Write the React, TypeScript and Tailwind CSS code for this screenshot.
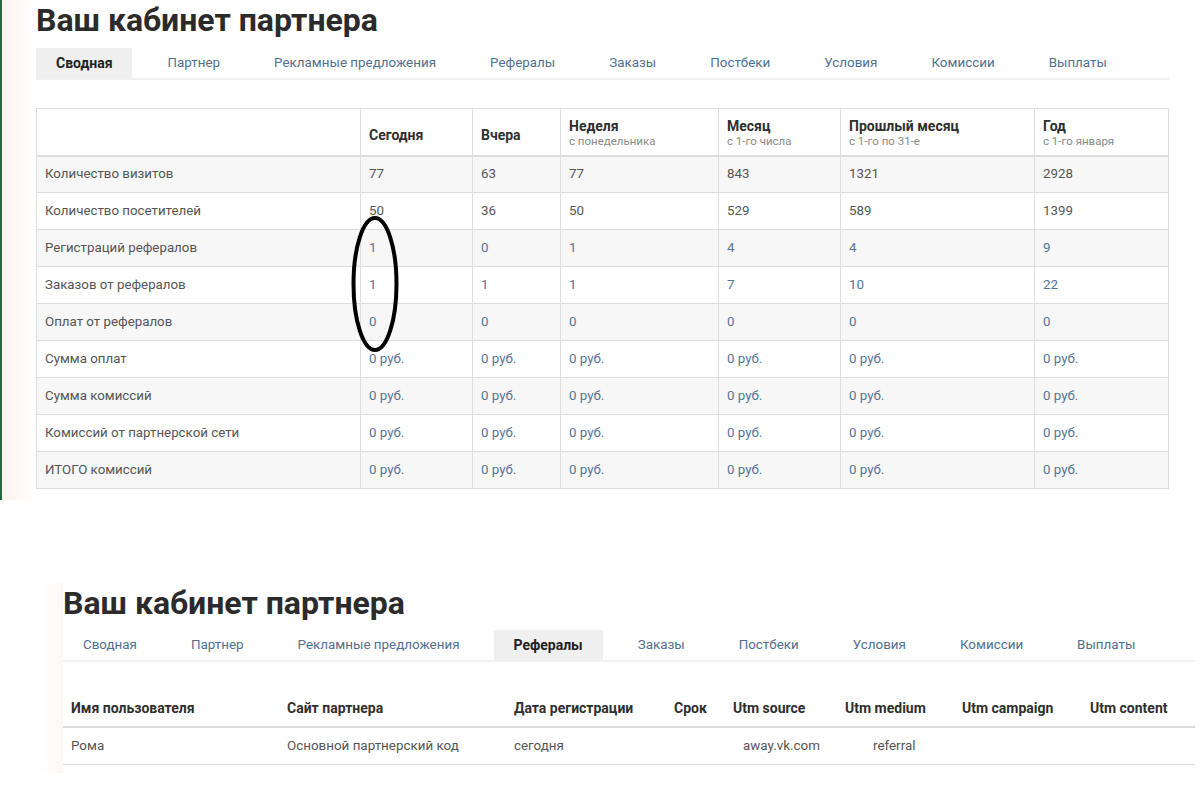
import React from "react";

const TABS = [
  "Сводная",
  "Партнер",
  "Рекламные предложения",
  "Рефералы",
  "Заказы",
  "Постбеки",
  "Условия",
  "Комиссии",
  "Выплаты",
];

type Col = { title: string; sub?: string; w: string };

const COLS: Col[] = [
  { title: "", w: "w-[324px]" },
  { title: "Сегодня", w: "w-[112px]" },
  { title: "Вчера", w: "w-[88px]" },
  { title: "Неделя", sub: "с понедельника", w: "w-[158px]" },
  { title: "Месяц", sub: "с 1-го числа", w: "w-[122px]" },
  { title: "Прошлый месяц", sub: "с 1-го по 31-е", w: "w-[194px]" },
  { title: "Год", sub: "с 1-го января", w: "w-[134px]" },
];

const RUB = ["0 руб.", "0 руб.", "0 руб.", "0 руб.", "0 руб.", "0 руб."];

const ROWS: { label: string; values: string[]; link: boolean }[] = [
  { label: "Количество визитов", values: ["77", "63", "77", "843", "1321", "2928"], link: false },
  { label: "Количество посетителей", values: ["50", "36", "50", "529", "589", "1399"], link: false },
  { label: "Регистраций рефералов", values: ["1", "0", "1", "4", "4", "9"], link: true },
  { label: "Заказов от рефералов", values: ["1", "1", "1", "7", "10", "22"], link: true },
  { label: "Оплат от рефералов", values: ["0", "0", "0", "0", "0", "0"], link: true },
  { label: "Сумма оплат", values: RUB, link: true },
  { label: "Сумма комиссий", values: RUB, link: true },
  { label: "Комиссий от партнерской сети", values: RUB, link: true },
  { label: "ИТОГО комиссий", values: RUB, link: true },
];

const REF_COLS = [
  { title: "Имя пользователя", w: "w-[216px]", value: "Рома", pl: "pl-2" },
  { title: "Сайт партнера", w: "w-[227px]", value: "Основной партнерский код", pl: "pl-2" },
  { title: "Дата регистрации", w: "w-[160px]", value: "сегодня", pl: "pl-2" },
  { title: "Срок", w: "w-[59px]", value: "", pl: "pl-2" },
  { title: "Utm source", w: "w-[112px]", value: "away.vk.com", pl: "pl-[18px]" },
  { title: "Utm medium", w: "w-[117px]", value: "referral", pl: "pl-[36px]" },
  { title: "Utm campaign", w: "w-[128px]", value: "", pl: "pl-2" },
  { title: "Utm content", w: "w-[113px]", value: "", pl: "pl-2" },
];

function Title() {
  return (
    <h1 className="whitespace-nowrap text-[32px] font-bold leading-[40px] text-[#2b2b2b]">
      Ваш кабинет партнера
    </h1>
  );
}

function Tabs({ active }: { active: string }) {
  return (
    <div className="flex border-b-2 border-[#f1f1f1]">
      {TABS.map((t) => (
        <div
          key={t}
          className={
            t === active
              ? "mr-[15px] whitespace-nowrap bg-[#efefef] px-5 text-[14px] font-bold leading-[30px] text-[#222]"
              : "mr-[14px] whitespace-nowrap px-5 text-[13.4px] leading-[30px] text-[#4f7090]"
          }
        >
          {t}
        </div>
      ))}
    </div>
  );
}

function Summary() {
  return (
    <table className="mt-[28px] w-[1132px] table-fixed border-collapse text-[13.3px]">
      <thead>
        <tr className="h-[47px] bg-white">
          {COLS.map((c, i) => (
            <th
              key={i}
              className={`${c.w} border border-b-2 border-[#dddddd] px-[8px] text-left align-middle ${
                c.sub ? "pt-[3px]" : "pt-[8px]"
              }`}
            >
              <div className="text-[14px] font-bold leading-[17px] text-[#2f2f2f]">{c.title}</div>
              {c.sub && (
                <div className="text-[11.5px] font-normal leading-[13px] text-[#8a8a8a]">{c.sub}</div>
              )}
            </th>
          ))}
        </tr>
      </thead>
      <tbody>
        {ROWS.map((r, i) => (
          <tr key={r.label} className={i % 2 === 0 ? "h-[37px] bg-[#f7f7f7]" : "h-[37px] bg-white"}>
            <td className="border border-[#dddddd] px-[8px] pb-[1px] text-[#555]">{r.label}</td>
            {r.values.map((v, j) => (
              <td
                key={j}
                className={`border border-[#dddddd] px-[8px] pb-[1px] ${r.link ? "text-[#52759a]" : "text-[#555]"}`}
              >
                {v}
              </td>
            ))}
          </tr>
        ))}
      </tbody>
    </table>
  );
}

function Referrals() {
  return (
    <div className="mt-[29px] w-[1132px]">
      <div className="flex h-[37px] items-center border-b-2 border-[#dcdcdc] text-[14px]">
        {REF_COLS.map((c) => (
          <div key={c.title} className={`${c.w} whitespace-nowrap pl-2 font-bold text-[#2f2f2f]`}>
            {c.title}
          </div>
        ))}
      </div>
      <div className="flex h-[37px] items-center border-b border-[#dcdcdc] text-[13.4px]">
        {REF_COLS.map((c) => (
          <div key={c.title} className={`${c.w} ${c.pl} whitespace-nowrap text-[#555]`}>
            {c.value}
          </div>
        ))}
      </div>
    </div>
  );
}

export default function App() {
  return (
    <div
      className="h-[803px] w-[1200px] overflow-hidden bg-white"
      style={{ fontFamily: 'Roboto, "Noto Sans", sans-serif' }}
    >
      {/* first screenshot */}
      <div className="flex h-[500px]">
        <div className="w-[2px] shrink-0 bg-[#1f6a42]" />
        <div className="w-[34px] shrink-0 bg-gradient-to-r from-[#fcf2ef] to-white" />
        <div className="relative">
          <Title />
          <div className="mt-[8px]">
            <Tabs active="Сводная" />
          </div>
          <Summary />
          {/* hand-drawn marker ellipse */}
          <svg
            className="absolute left-[314px] top-[215px]"
            width="52"
            height="140"
            viewBox="0 0 52 140"
            fill="none"
          >
            <ellipse cx="25" cy="69" rx="21.5" ry="66" stroke="#000" strokeWidth="4" />
          </svg>
        </div>
      </div>

      {/* second screenshot */}
      <div className="mt-[83px] flex h-[190px]">
        <div className="w-[38px] shrink-0" />
        <div className="w-[25px] shrink-0 bg-gradient-to-r from-white to-[#fdf8f6]" />
        <div>
          <Title />
          <div className="mt-[7px]">
            <Tabs active="Рефералы" />
          </div>
          <Referrals />
        </div>
      </div>
    </div>
  );
}
